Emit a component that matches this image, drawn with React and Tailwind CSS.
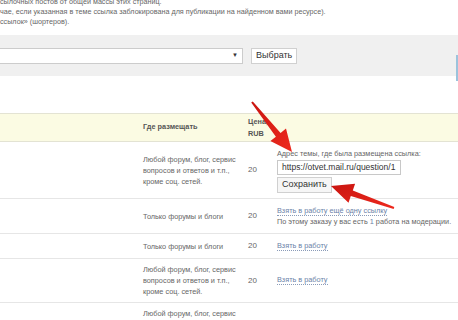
import React from 'react';

const font = { fontFamily: '"Liberation Sans", Arial, sans-serif' };

function Arrows() {
  return (
    <svg className="absolute left-0 top-0 pointer-events-none" width="458" height="320" viewBox="0 0 458 320">
      <defs>
        <linearGradient id="ar" x1="0" y1="0" x2="1" y2="1">
          <stop offset="0" stopColor="#c91510" />
          <stop offset="1" stopColor="#ee2a1e" />
        </linearGradient>
      </defs>
      <polygon
        points="251.2,102.6 275.9,136.7 270.4,141 292,152 286,128.5 280.6,133 252.8,101.4"
        fill="url(#ar)"
      />
      <polygon
        points="394.3,207 352.8,190.5 355.1,183.8 331,186 348.5,202.7 350.8,196.1 393.7,208.9"
        fill="url(#ar)"
      />
    </svg>
  );
}

function Link({ children }) {
  return <span className="text-[#6b82a8] border-b border-dotted border-[#8a9bb8]">{children}</span>;
}

function Row({ h, where, action }) {
  return (
    <div className={`flex items-center border-b border-[#e6e6e6] ${h}`}>
      <div className="w-[143px] shrink-0" />
      <div className="w-[105px] shrink-0 leading-[11px]">{where}</div>
      <div className="w-[29px] shrink-0 text-[8px]">20</div>
      <div className="flex-1 whitespace-nowrap">{action}</div>
    </div>
  );
}

const anyForum = (
  <>
    Любой форум, блог, сервис
    <br />
    вопросов и ответов и т.п.,
    <br />
    кроме соц. сетей.
  </>
);

export default function App() {
  return (
    <div className="relative w-[458px] h-[320px] overflow-hidden bg-white text-[#666] text-[7.3px]" style={font}>
      <div className="-mt-[3px] leading-[10px] whitespace-nowrap text-[7.2px]">
        <div>сылочных постов от общей массы этих страниц.</div>
        <div>чае, если указанная в теме ссылка заблокирована для публикации на найденном вами ресурсе).</div>
        <div>ссылок» (шортеров).</div>
      </div>

      <div className="mt-[8px] h-[41px] bg-[#f0f0f0] flex items-center relative">
        <div className="w-[243px] h-[16px] bg-white border border-[#cccccc] border-l-0 flex items-center justify-end pr-[4px]">
          <span className="text-[6px] text-[#333]">▼</span>
        </div>
        <div className="ml-[8px] h-[16px] px-[4px] bg-white border border-[#d0d0d0] flex items-center text-[9px] text-[#333]">
          Выбрать
        </div>
        <div className="absolute right-0 top-[20px] w-[2px] h-[26px] bg-[#9cc3dc]" />
      </div>

      <div className="mt-[37px] h-[29px] bg-[#fbfbe3] border-y border-[#e3e3d3] flex items-center font-bold text-[#555]">
        <div className="w-[143px] shrink-0" />
        <div className="w-[105px] shrink-0">Где размещать</div>
        <div className="leading-[12px]">
          Цена,
          <br />
          RUB
        </div>
      </div>

      <Row
        h="h-[57px]"
        where={anyForum}
        action={
          <div className="flex flex-col items-start pt-[2px]">
            <div className="leading-[10px]">Адрес темы, где была размещена ссылка:</div>
            <div className="mt-[1px] w-[124px] h-[15px] border border-[#c8c8c8] bg-white flex items-center pl-[4px] text-[8.5px] text-[#333] overflow-hidden">
              https://otvet.mail.ru/question/1
            </div>
            <div className="mt-[2px] h-[16px] px-[4px] border border-[#d0d0d0] bg-[#f6f6f6] flex items-center text-[9px] text-[#333]">
              Сохранить
            </div>
          </div>
        }
      />
      <Row
        h="h-[35px]"
        where="Только форумы и блоги"
        action={
          <div className="leading-[11px]">
            <Link>Взять в работу ещё одну ссылку</Link>
            <div>
              По этому заказу у вас есть <span className="text-[#6b82a8]">1</span> работа на модерации.
            </div>
          </div>
        }
      />
      <Row h="h-[25px]" where="Только форумы и блоги" action={<Link>Взять в работу</Link>} />
      <Row h="h-[44px]" where={anyForum} action={<Link>Взять в работу</Link>} />
      <Row h="h-[44px]" where={anyForum} action={null} />

      <Arrows />
    </div>
  );
}
